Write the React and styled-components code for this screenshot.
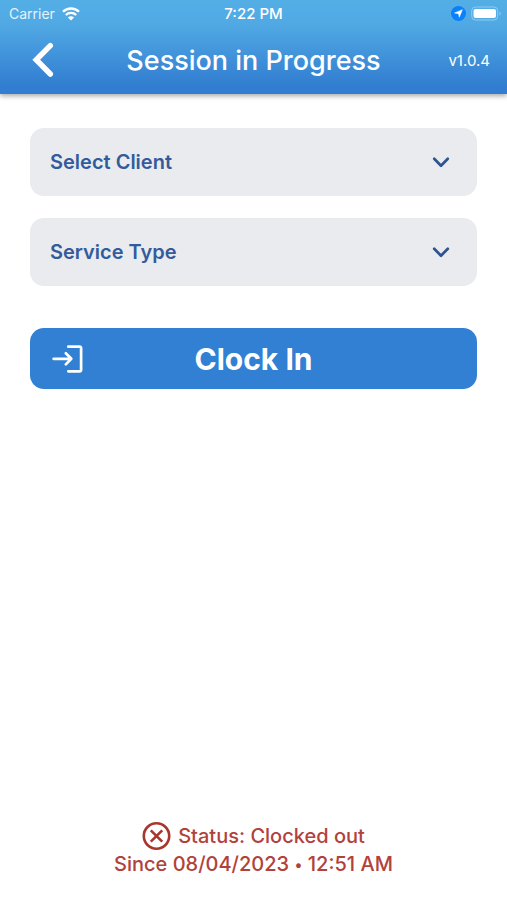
import React from "react";
import styled, { createGlobalStyle } from "styled-components";

const GlobalStyle = createGlobalStyle`
  * {
    box-sizing: border-box;
  }

  body {
    margin: 0;
    background-color: #ffffff;
    font-family: Inter, "Liberation Sans", sans-serif;
  }

  button,
  select {
    font-family: inherit;
  }
`;

const Screen = styled.div`
  display: flex;
  flex-direction: column;
  min-height: 100vh;
`;

const Header = styled.header`
  background: linear-gradient(#54aee6 0%, #50a9e3 26%, #317dd1 92%);
  box-shadow: 0 2px 5px rgba(0, 0, 0, 0.35);
  color: #ffffff;
`;

const StatusBar = styled.div`
  display: grid;
  grid-template-columns: 1fr auto 1fr;
  align-items: center;
  height: 27px;
  padding: 0 5px;
`;

const Carrier = styled.div`
  display: flex;
  align-items: center;
  gap: 7px;
  padding-left: 4px;
  font-size: 14px;
  color: #e4f3fc;
`;

const Time = styled.time`
  font-weight: 500;
  font-size: 15px;
`;

const Indicators = styled.div`
  display: flex;
  align-items: center;
  justify-content: flex-end;
  gap: 5px;
`;

const NavBar = styled.div`
  display: grid;
  grid-template-columns: 1fr auto 1fr;
  align-items: center;
  height: 67px;
  padding: 0 17px 1px;
`;

const BackButton = styled.button`
  display: flex;
  justify-self: start;
  border: 0;
  background: none;
  padding: 4px 13px;
  color: #ffffff;
  cursor: pointer;
`;

const Title = styled.h1`
  margin: 0;
  font-weight: 500;
  font-size: 27px;
  line-height: 33px;
`;

const Version = styled.span`
  justify-self: end;
  font-size: 15px;
`;

const Main = styled.main`
  display: flex;
  flex: 1;
  flex-direction: column;
  padding: 34px 30px 22px;
`;

const Form = styled.form`
  display: flex;
  flex-direction: column;
  gap: 22px;
`;

const Field = styled.div`
  display: grid;
  align-items: center;

  > * {
    grid-area: 1 / 1;
  }

  svg {
    justify-self: end;
    margin-right: 27px;
    pointer-events: none;
  }
`;

const Select = styled.select`
  appearance: none;
  width: 100%;
  height: 68px;
  border: 0;
  border-radius: 14px;
  background-color: #e9ebef;
  padding: 0 56px 0 20px;
  font-weight: 600;
  font-size: 20px;
  color: #335b9c;
`;

const ClockButton = styled.button`
  display: grid;
  grid-template-columns: 1fr auto 1fr;
  align-items: center;
  height: 61px;
  margin-top: 20px;
  border: 0;
  border-radius: 14px;
  background-color: #3180d3;
  padding: 0 22px;
  font-weight: 700;
  font-size: 30px;
  color: #ffffff;
  cursor: pointer;
`;

const Status = styled.footer`
  display: flex;
  flex-direction: column;
  align-items: center;
  margin-top: auto;
  font-weight: 500;
  font-size: 20px;
  line-height: 28px;
  color: #b1423a;

  p {
    margin: 0;
  }
`;

const StatusLine = styled.p`
  display: flex;
  align-items: center;
  gap: 7px;
`;

const Dot = styled.span`
  font-size: 15px;
  line-height: 1;
  vertical-align: 1px;
`;

const WifiIcon = () => (
  <svg width="18" height="14" viewBox="0 0 18 14" fill="none" stroke="#fff" aria-hidden="true">
    <path d="M1 4.8C5.4.4 12.6.4 17 4.8" strokeWidth="2.3" />
    <path d="M3.8 8C6.8 5.1 11.2 5.1 14.2 8" strokeWidth="2.2" />
    <path d="M9 13.6 5.9 10.4c1.7-1.6 4.5-1.6 6.2 0z" fill="#fff" stroke="none" />
  </svg>
);

const LocationIcon = () => (
  <svg width="15" height="15" viewBox="0 0 15 15" aria-hidden="true">
    <circle cx="7.5" cy="7.5" r="7.5" fill="#0b80fb" />
    <path d="M11.4 3.7 8.3 11.3 7.5 7.7 3.5 7z" fill="#fff" stroke="#fff" strokeWidth=".5" strokeLinejoin="round" />
  </svg>
);

const BatteryIcon = () => (
  <svg width="31" height="15" viewBox="0 0 31 15" aria-hidden="true">
    <rect x=".7" y="1" width="26" height="13" rx="3.8" fill="none" stroke="#8ecbf1" />
    <rect x="2.5" y="3" width="22.5" height="9" rx="2" fill="#fff" />
    <path d="M28.5 5.3c1.7.7 1.7 3.7 0 4.4z" fill="#8ecbf1" />
  </svg>
);

const BackIcon = () => (
  <svg width="26" height="36" viewBox="0 0 26 36" fill="none" aria-hidden="true">
    <path
      d="M20.3 3.6 6.2 17.8 20.3 32"
      stroke="#fff"
      strokeWidth="5.5"
      strokeLinecap="round"
    />
  </svg>
);

const ChevronIcon = () => (
  <svg width="18" height="12" viewBox="0 0 18 12" fill="none" aria-hidden="true">
    <path
      d="M2.2 2.8 9 9.7l6.8-6.9"
      stroke="#2d5391"
      strokeWidth="2.7"
      strokeLinecap="round"
      strokeLinejoin="round"
    />
  </svg>
);

const ClockInIcon = () => (
  <svg
    width="32"
    height="30"
    viewBox="0 0 32 30"
    fill="none"
    stroke="#fff"
    strokeWidth="2.7"
    strokeLinecap="round"
    strokeLinejoin="round"
    aria-hidden="true"
  >
    <path d="M16.3 2.7h11.2q1.6 0 1.6 1.6v21.4q0 1.6-1.6 1.6H16.3" />
    <path d="M1.6 14.8h17.6M13.8 9.2l5.5 5.6-5.5 5.6" />
  </svg>
);

const ClockedOutIcon = () => (
  <svg width="29" height="28" viewBox="0 0 29 28" fill="none" stroke="#a9352c" aria-hidden="true">
    <circle cx="14.5" cy="14" r="12.7" strokeWidth="2.6" />
    <path d="m8.8 8.3 11.4 11.4m0-11.4L8.8 19.7" strokeWidth="2.6" />
  </svg>
);

const fields = [
  { id: "client", label: "Select Client" },
  { id: "service", label: "Service Type" },
];

const getField = ({ id, label }) => (
  <Field key={id}>
    <Select id={id} name={id} aria-label={label} defaultValue="">
      <option value="">{label}</option>
    </Select>
    <ChevronIcon />
  </Field>
);

const App = () => (
  <>
    <GlobalStyle />
    <Screen>
      <Header>
        <StatusBar>
          <Carrier>
            Carrier
            <WifiIcon />
          </Carrier>
          <Time>7:22 PM</Time>
          <Indicators>
            <LocationIcon />
            <BatteryIcon />
          </Indicators>
        </StatusBar>
        <NavBar>
          <BackButton type="button" aria-label="Back">
            <BackIcon />
          </BackButton>
          <Title>Session in Progress</Title>
          <Version>v1.0.4</Version>
        </NavBar>
      </Header>
      <Main>
        <Form>
          {fields.map(getField)}
          <ClockButton type="button">
            <ClockInIcon />
            <span>Clock In</span>
          </ClockButton>
        </Form>
        <Status>
          <StatusLine>
            <ClockedOutIcon />
            Status: Clocked out
          </StatusLine>
          <p>
            Since 08/04/2023 <Dot>•</Dot> 12:51 AM
          </p>
        </Status>
      </Main>
    </Screen>
  </>
);

export default App;
